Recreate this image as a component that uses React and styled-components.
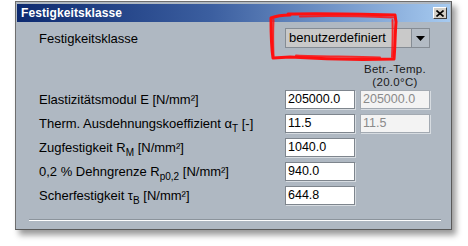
import React from "react";
import styled, { createGlobalStyle } from "styled-components";

const GlobalStyle = createGlobalStyle`
  html, body {
    margin: 0;
    padding: 0;
    background: #fff;
  }
  body {
    font-family: "Liberation Sans", Arial, sans-serif;
  }
`;

const Page = styled.div`
  position: relative;
  width: 468px;
  height: 246px;
  overflow: hidden;
  padding: 1px 0 0 15px;
  box-sizing: border-box;
`;

const Window = styled.div`
  width: 437px;
  height: 229px;
  box-sizing: border-box;
  border: 1px solid #6e6e6e;
  border-right-color: #5a5a5a;
  border-bottom-color: #5a5a5a;
  background: #afb8c2;
  box-shadow: 4px 5px 6px rgba(0, 0, 0, 0.4);
  display: flex;
  flex-direction: column;
`;

const TitleBar = styled.div`
  height: 18px;
  margin: 2px 1px 0 1px;
  padding: 0 3px 0 4px;
  background: linear-gradient(to right, #0d2a70 0%, #3c5fa0 45%, #a6caf0 100%);
  display: flex;
  align-items: center;
  justify-content: space-between;
`;

const Title = styled.span`
  color: #fff;
  font-weight: bold;
  font-size: 12px;
  letter-spacing: 0.1px;
`;

const CloseButton = styled.div`
  width: 14px;
  height: 12px;
  box-sizing: border-box;
  background: #d4d0c8;
  border: 1px solid;
  border-color: #fff #404040 #404040 #fff;
  display: flex;
  align-items: center;
  justify-content: center;
`;

const Content = styled.div`
  padding: 6px 21px 0 23px;
  display: flex;
  flex-direction: column;
`;

const Form = styled.div`
  display: grid;
  grid-template-columns: 1fr 70px 70px;
  column-gap: 5px;
  row-gap: 5px;
  align-items: center;
`;

const Label = styled.div`
  font-size: 13px;
  color: #000;
  white-space: nowrap;
  line-height: 19px;

  sub {
    font-size: 10px;
    vertical-align: -4px;
    line-height: 0;
  }
`;

const Combo = styled.div`
  grid-column: 2 / span 2;
  height: 20px;
  box-sizing: border-box;
  border: 1px solid #858c94;
  background: #c9c9c9;
  display: flex;
  align-items: stretch;
`;

const ComboText = styled.div`
  flex: 1;
  font-size: 13px;
  line-height: 18px;
  padding-left: 3px;
  color: #000;
`;

const ComboArrow = styled.div`
  width: 17px;
  border-left: 1px solid #858c94;
  background: #b3bbc4;
  display: flex;
  align-items: center;
  justify-content: center;
`;

const TempHead = styled.div`
  grid-column: 3;
  font-size: 11.5px;
  letter-spacing: 0.3px;
  line-height: 13px;
  text-align: center;
  color: #1a1a1a;
  margin: 10px -8px -4px;
`;

const Field = styled.div`
  height: 19px;
  box-sizing: border-box;
  border: 1px solid ${(p) => (p.$disabled ? "#a3aab2" : "#7e858d")};
  box-shadow: 1px 1px 0 #d7dce1;
  background: ${(p) => (p.$disabled ? "#f3f3f3" : "#fff")};
  color: ${(p) => (p.$disabled ? "#8a8a8a" : "#000")};
  font-size: 12.5px;
  line-height: 17px;
  padding-left: 2px;
`;

const Separator = styled.div`
  margin: 14px -11px 0 -10px;
  border-top: 1px solid #8c949c;
  height: 1px;
  background: #fff;
`;

const Annotation = styled.svg`
  position: absolute;
  left: 0;
  top: 0;
  pointer-events: none;
`;

const rows = [
  { label: <>Elastizitätsmodul E [N/mm²]</>, value: "205000.0", temp: "205000.0" },
  { label: <>Therm. Ausdehnungskoeffizient α<sub>T</sub> [-]</>, value: "11.5", temp: "11.5" },
  { label: <>Zugfestigkeit R<sub>M</sub> [N/mm²]</>, value: "1040.0" },
  { label: <>0,2 % Dehngrenze R<sub>p0,2</sub> [N/mm²]</>, value: "940.0" },
  { label: <>Scherfestigkeit τ<sub>B</sub> [N/mm²]</>, value: "644.8" },
];

export default function App() {
  return (
    <Page>
      <GlobalStyle />
      <Window>
        <TitleBar>
          <Title>Festigkeitsklasse</Title>
          <CloseButton>
            <svg width="8" height="7" viewBox="0 0 8 7">
              <path d="M0.5 0.5 L7.5 6.5 M7.5 0.5 L0.5 6.5" stroke="#000" strokeWidth="1.6" />
            </svg>
          </CloseButton>
        </TitleBar>
        <Content>
          <Form>
            <Label>Festigkeitsklasse</Label>
            <Combo>
              <ComboText>benutzerdefiniert</ComboText>
              <ComboArrow>
                <svg width="9" height="5" viewBox="0 0 9 5">
                  <path d="M0 0 H9 L4.5 5 Z" fill="#000" />
                </svg>
              </ComboArrow>
            </Combo>
            <TempHead>
              Betr.-Temp.
              <br />
              (20.0°C)
            </TempHead>
            {rows.map((r, i) => (
              <React.Fragment key={i}>
                <Label>{r.label}</Label>
                <Field>{r.value}</Field>
                {r.temp ? <Field $disabled>{r.temp}</Field> : <div />}
              </React.Fragment>
            ))}
          </Form>
          <Separator />
        </Content>
      </Window>
      <Annotation width="468" height="246" viewBox="0 0 468 246">
        <g fill="none" stroke="#ff1010" strokeLinecap="round" strokeLinejoin="round">
          <path
            d="M288 14 C320 13 360 14 395 15 L396 22 C395 35 395 48 394 59 C360 60 320 59 290 57 L273 58 C271 45 271 30 271 18 C276 16 282 15 290 15"
            strokeWidth="3"
          />
          <path
            d="M300 16.5 C330 15.5 365 16.5 393 17.5 M392.5 20 C393 34 392.5 46 392 57 M380 57.5 C350 56.5 320 56.5 296 55.5 M273.5 56 C273 42 273 30 273.5 20"
            strokeWidth="2"
            opacity="0.85"
          />
        </g>
      </Annotation>
    </Page>
  );
}
